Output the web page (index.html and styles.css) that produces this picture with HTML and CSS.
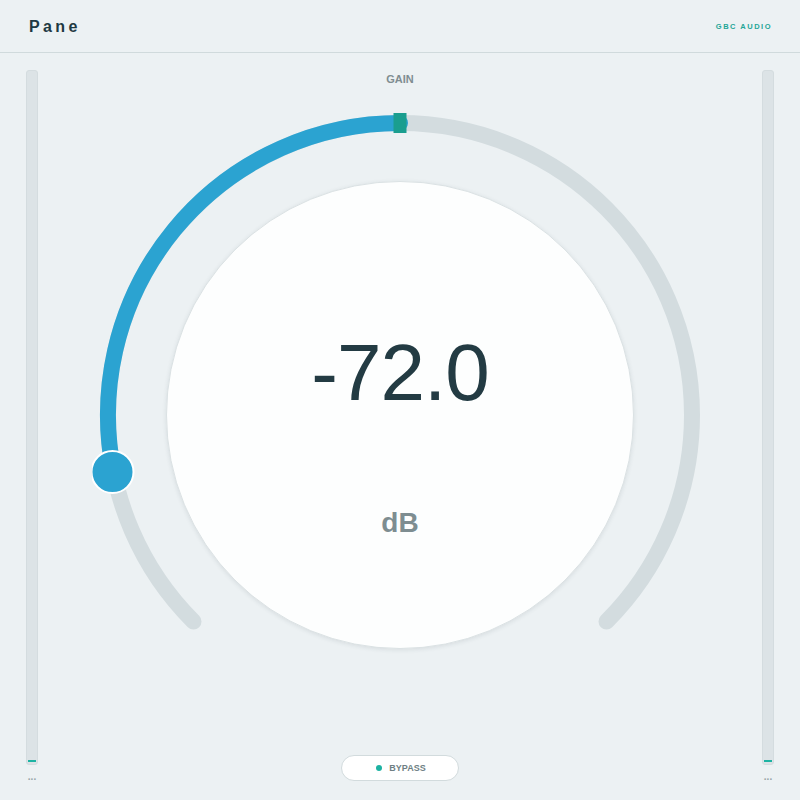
FILE: index.html
```html
<!DOCTYPE html>
<html>
<head>
<meta charset="utf-8">
<link rel="stylesheet" href="styles.css">
</head>
<body>
<div class="app">
  <header class="header">
    <div class="title">Pane</div>
    <div class="brand">GBC AUDIO</div>
  </header>
  <main class="main">
    <div class="meter-col">
      <div class="meter"><div class="meter-level"></div></div>
      <div class="meter-label">...</div>
    </div>
    <div class="center">
      <div class="gain-label">GAIN</div>
      <div class="knob">
        <svg class="knob-svg" width="616" height="540" viewBox="0 0 616 540">
          <path d="M 101.5 516.5 A 292 292 0 1 1 514.5 516.5" fill="none" stroke="#d3dcdf" stroke-width="16" stroke-linecap="round"/>
          <path d="M 21.6 367 A 292 292 0 0 1 308 18" fill="none" stroke="#2ba3d1" stroke-width="16" stroke-linecap="round"/>
          <rect x="301.5" y="8" width="13" height="20" fill="#1a9e8f"/>
          <circle cx="20.5" cy="367" r="21" fill="#2ba3d1" stroke="#ffffff" stroke-width="2"/>
        </svg>
        <div class="face">
          <div class="value">-72.0</div>
          <div class="unit">dB</div>
        </div>
      </div>
      <button class="bypass"><span class="dot"></span>BYPASS</button>
    </div>
    <div class="meter-col">
      <div class="meter"><div class="meter-level"></div></div>
      <div class="meter-label">...</div>
    </div>
  </main>
</div>
</body>
</html>
```

FILE: styles.css
```css
html, body {
  margin: 0;
  padding: 0;
}
body {
  background: #ecf1f3;
  font-family: "Liberation Sans", Arial, sans-serif;
}
.app {
  width: 800px;
  height: 800px;
  overflow: hidden;
}
.header {
  height: 52px;
  border-bottom: 1px solid #d0dadc;
  display: flex;
  align-items: center;
  justify-content: space-between;
  padding: 0 28px 0 29px;
  box-sizing: content-box;
}
.title {
  font-size: 16px;
  font-weight: 700;
  letter-spacing: 3.4px;
  color: #1e3942;
  margin-top: 1px;
}
.brand {
  font-size: 7.5px;
  font-weight: 700;
  letter-spacing: 1.5px;
  color: #1fa697;
  margin-top: 1px;
}
.main {
  display: grid;
  grid-template-columns: 12px 1fr 12px;
  padding: 17px 26px 0 26px;
}
.meter-col {
  display: flex;
  flex-direction: column;
  align-items: center;
}
.meter {
  width: 12px;
  height: 695px;
  box-sizing: border-box;
  background: #dce3e6;
  border: 1px solid #d4dcdf;
  border-radius: 3px;
  display: flex;
  align-items: flex-end;
  padding: 2px 1px;
}
.meter-level {
  width: 100%;
  height: 2px;
  background: #1db3a3;
}
.meter-label {
  font-size: 10px;
  line-height: 10px;
  font-weight: 700;
  color: #98a4a7;
  margin-top: 7px;
  letter-spacing: 0;
}
.center {
  display: flex;
  flex-direction: column;
  align-items: center;
}
.gain-label {
  margin-top: 3px;
  font-size: 11px;
  line-height: 12px;
  font-weight: 700;
  color: #7f8d91;
}
.knob {
  position: relative;
  width: 616px;
  height: 540px;
  margin-top: 20px;
}
.knob-svg {
  display: block;
}
.face {
  position: absolute;
  left: 74px;
  top: 76px;
  width: 468px;
  height: 468px;
  box-sizing: border-box;
  border-radius: 50%;
  background: #fdfefe;
  border: 1px solid #dbe2e4;
  box-shadow: 0 1px 4px rgba(40, 60, 70, 0.10);
  display: flex;
  flex-direction: column;
  align-items: center;
}
.value {
  margin-top: 151px;
  font-size: 80px;
  line-height: 80px;
  color: #233b43;
  letter-spacing: -1px;
}
.unit {
  margin-top: 96px;
  font-size: 28px;
  line-height: 28px;
  font-weight: 700;
  color: #7e8d91;
}
.bypass {
  margin-top: 110px;
  width: 118px;
  height: 26px;
  border-radius: 13px;
  border: 1px solid #d2dbdd;
  background: #ffffff;
  display: flex;
  align-items: center;
  justify-content: center;
  gap: 7px;
  font-family: "Liberation Sans", Arial, sans-serif;
  font-size: 9px;
  font-weight: 700;
  color: #6f7f84;
  padding: 0 0 0 2px;
}
.dot {
  width: 6px;
  height: 6px;
  border-radius: 50%;
  background: #1cb2a2;
}
```
